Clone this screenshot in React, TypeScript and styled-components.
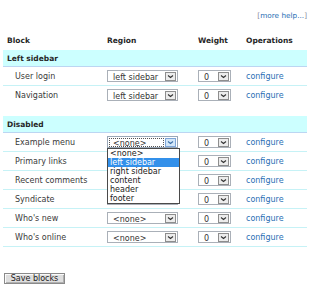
import React from "react";
import styled, { createGlobalStyle } from "styled-components";

const Global = createGlobalStyle`
  html, body { margin: 0; padding: 0; background: #fff; }
  body { font-family: "DejaVu Sans", Verdana, sans-serif; font-size: 8px; color: #3a3a3a; }
`;

const Page = styled.div`
  width: 316px;
  height: 290px;
  padding: 0 9px 0 3px;
  box-sizing: border-box;
`;

const HelpLine = styled.div`
  padding-top: 11px;
  height: 30px;
  box-sizing: border-box;
  text-align: right;
  font-size: 7.3px;
  line-height: 9px;
  color: #8a8a9a;
`;

const Link = styled.a`
  color: #2a6fb5;
  text-decoration: none;
`;

const Table = styled.table`
  border-collapse: collapse;
  width: 304px;
  table-layout: fixed;
`;

const Th = styled.th`
  text-align: left;
  font-weight: bold;
  font-size: 7.5px;
  color: #262626;
  padding: 0 4px;
  height: 20px;
  vertical-align: middle;
`;

const RegionCell = styled.td`
  background: #ccffff;
  font-weight: bold;
  font-size: 7.5px;
  color: #262626;
  padding: 0 4px;
  height: 16px;
  border-bottom: 1px solid #bcd6f2;
`;

const Row = styled.tr<{ $noBorder?: boolean }>`
  border-bottom: 1px solid ${(p) => (p.$noBorder ? "transparent" : "#c6f2f6")};
`;

const Td = styled.td<{ $indent?: boolean }>`
  height: 18px;
  padding: 0 0 0 ${(p) => (p.$indent ? "12px" : "4px")};
  vertical-align: middle;
  white-space: nowrap;
`;

const SpacerCell = styled.td`
  height: 11px;
  padding: 0;
`;

const SelectBox = styled.div<{ $w: number; $focus?: boolean }>`
  position: relative;
  display: flex;
  align-items: center;
  width: ${(p) => p.$w}px;
  height: 12px;
  box-sizing: border-box;
  border: 1px solid ${(p) => (p.$focus ? "#9aa8b8" : "#aab0b8")};
  background: #fff;
  padding: 0 1px 0 1px;
  gap: 1px;
`;

const SelectText = styled.div<{ $focus?: boolean }>`
  flex: 1;
  height: 9px;
  line-height: 9px;
  padding-left: 3px;
  box-sizing: border-box;
  border: 1px dotted ${(p) => (p.$focus ? "#555" : "transparent")};
  color: #333;
  overflow: hidden;
`;

const ArrowBox = styled.div<{ $focus?: boolean }>`
  width: 11px;
  height: 9px;
  box-sizing: border-box;
  border: 1px solid ${(p) => (p.$focus ? "#7fa6d8" : "#8e8e8e")};
  background: ${(p) => (p.$focus ? "#d2e6f8" : "#ececec")};
  display: flex;
  align-items: center;
  justify-content: center;
`;

const OptionList = styled.div`
  position: absolute;
  left: -1px;
  top: 11px;
  width: 73px;
  box-sizing: border-box;
  border: 1px solid #4a4a4a;
  background: #fff;
  z-index: 5;
`;

const Option = styled.div<{ $active?: boolean }>`
  height: 9px;
  line-height: 9px;
  padding-left: 2px;
  background: ${(p) => (p.$active ? "#3390ea" : "#fff")};
  color: ${(p) => (p.$active ? "#fff" : "#222")};
`;

const Button = styled.button`
  margin: 26px 0 0 1px;
  height: 11px;
  width: 61px;
  padding: 0;
  font-family: "DejaVu Sans", Verdana, sans-serif;
  font-size: 8px;
  line-height: 9px;
  color: #222;
  background: #dedede;
  border: 1px solid #8a8a8a;
  box-shadow: inset 1px 1px 0 #fafafa, inset -1px -1px 0 #b0b0b0;
  display: block;
`;

const Arrow = ({ focus }: { focus?: boolean }) => (
  <svg width="7" height="5" viewBox="0 0 7 5">
    <path d="M1 1.5 L3.5 3.5 L6 1.5" fill="none" stroke={focus ? "#3a6ea8" : "#333"} strokeWidth="1.1" />
  </svg>
);

const options = ["<none>", "left sidebar", "right sidebar", "content", "header", "footer"];

const Select = ({ value, w, open }: { value: string; w: number; open?: boolean }) => (
  <SelectBox $w={w} $focus={open}>
    <SelectText $focus={open}>{value}</SelectText>
    <ArrowBox $focus={open}>
      <Arrow focus={open} />
    </ArrowBox>
    {open && (
      <OptionList>
        {options.map((o) => (
          <Option key={o} $active={o === "left sidebar"}>
            {o}
          </Option>
        ))}
      </OptionList>
    )}
  </SelectBox>
);

type Block = { name: string; region: string; open?: boolean; noBorder?: boolean };

const BlockRow = ({ b }: { b: Block }) => (
  <Row $noBorder={b.noBorder}>
    <Td $indent>{b.name}</Td>
    <Td>
      <Select value={b.region} w={71} open={b.open} />
    </Td>
    <Td>
      <Select value="0" w={33} />
    </Td>
    <Td>
      <Link href="#">configure</Link>
    </Td>
  </Row>
);

const left: Block[] = [
  { name: "User login", region: "left sidebar" },
  { name: "Navigation", region: "left sidebar", noBorder: true },
];

const disabled: Block[] = [
  { name: "Example menu", region: "<none>", open: true },
  { name: "Primary links", region: "<none>" },
  { name: "Recent comments", region: "<none>" },
  { name: "Syndicate", region: "<none>" },
  { name: "Who's new", region: "<none>" },
  { name: "Who's online", region: "<none>" },
];

export default function App() {
  return (
    <Page>
      <Global />
      <HelpLine>
        [<Link href="#">more help...</Link>]
      </HelpLine>
      <Table>
        <colgroup>
          <col style={{ width: 100 }} />
          <col style={{ width: 91 }} />
          <col style={{ width: 48 }} />
          <col style={{ width: 65 }} />
        </colgroup>
        <thead>
          <tr>
            <Th>Block</Th>
            <Th>Region</Th>
            <Th>Weight</Th>
            <Th>Operations</Th>
          </tr>
        </thead>
        <tbody>
          <tr>
            <RegionCell colSpan={4}>Left sidebar</RegionCell>
          </tr>
          {left.map((b) => (
            <BlockRow key={b.name} b={b} />
          ))}
          <tr>
            <SpacerCell colSpan={4} />
          </tr>
          <tr>
            <RegionCell colSpan={4}>Disabled</RegionCell>
          </tr>
          {disabled.map((b) => (
            <BlockRow key={b.name} b={b} />
          ))}
        </tbody>
      </Table>
      <Button>Save blocks</Button>
    </Page>
  );
}
